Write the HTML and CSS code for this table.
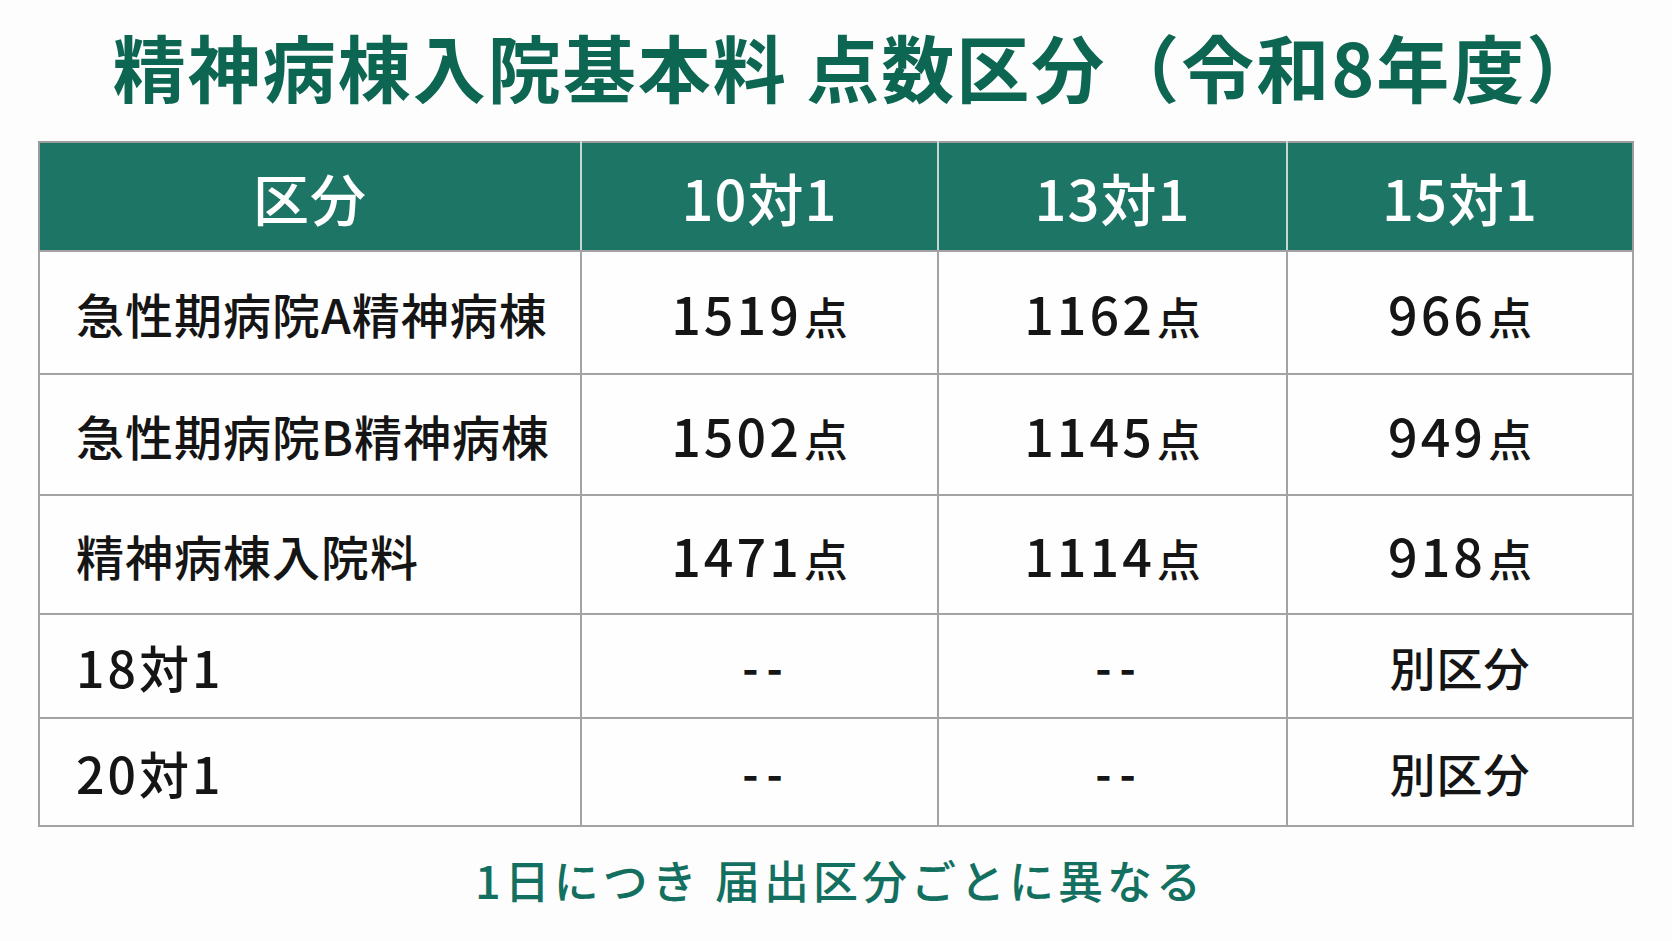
FILE: index.html
```html
<!DOCTYPE html>
<html lang="ja">
<head>
<meta charset="utf-8">
<title>精神病棟入院基本料 点数区分（令和8年度）</title>
<link rel="stylesheet" href="styles.css">
</head>
<body>
<main class="page">
  <h1 class="title">精神病棟入院基本料 点数区分（令和8年度）</h1>
  <table class="fees">
    <colgroup>
      <col class="c-label"><col class="c-a"><col class="c-b"><col class="c-c">
    </colgroup>
    <thead>
      <tr class="head-row">
        <th>区分</th><th>10対1</th><th>13対1</th><th>15対1</th>
      </tr>
    </thead>
    <tbody>
      <tr class="row-1">
        <td class="label">急性期病院A精神病棟</td>
        <td class="num">1519<span class="unit">点</span></td>
        <td class="num">1162<span class="unit">点</span></td>
        <td class="num">966<span class="unit">点</span></td>
      </tr>
      <tr class="row-2">
        <td class="label">急性期病院B精神病棟</td>
        <td class="num">1502<span class="unit">点</span></td>
        <td class="num">1145<span class="unit">点</span></td>
        <td class="num">949<span class="unit">点</span></td>
      </tr>
      <tr class="row-3">
        <td class="label">精神病棟入院料</td>
        <td class="num">1471<span class="unit">点</span></td>
        <td class="num">1114<span class="unit">点</span></td>
        <td class="num">918<span class="unit">点</span></td>
      </tr>
      <tr class="row-4">
        <td class="label ratio">18対1</td>
        <td class="dash">--</td>
        <td class="dash">--</td>
        <td class="other">別区分</td>
      </tr>
      <tr class="row-5">
        <td class="label ratio">20対1</td>
        <td class="dash">--</td>
        <td class="dash">--</td>
        <td class="other">別区分</td>
      </tr>
    </tbody>
  </table>
  <p class="note">1日につき 届出区分ごとに異なる</p>
</main>
</body>
</html>
```

FILE: styles.css
```css
html, body {
  margin: 0;
  padding: 0;
  background: #fdfdfd;
}

body {
  font-family: "Noto Sans CJK JP", "Noto Sans", sans-serif;
  color: #151515;
}

.page {
  display: flex;
  flex-direction: column;
  align-items: center;
  padding-top: 22px;
}

.title {
  margin: 0;
  padding-left: 42px;
  font-size: 73px;
  line-height: 86px;
  font-weight: 700;
  color: #0d6651;
  letter-spacing: 2px;
  white-space: nowrap;
}

.fees {
  margin-top: 33px;
  width: 1594px;
  border-collapse: collapse;
  table-layout: fixed;
  border: 2px solid #9c9c9c;
  background: #fefefe;
}

.c-label { width: 542px; }
.c-a { width: 357px; }
.c-b { width: 349px; }
.c-c { width: 346px; }

.fees th,
.fees td {
  border: 2px solid #a3a3a3;
  padding: 0;
}

.head-row {
  height: 109px;
  background: #1d7665;
}

.head-row th {
  color: #ffffff;
  font-size: 56px;
  font-weight: 500;
  text-align: center;
  letter-spacing: 1px;
  border-top-color: #9c9c9c;
  border-left-color: #c8d6d2;
  border-right-color: #c8d6d2;
}

.head-row th:first-child { border-left-color: #9c9c9c; }
.head-row th:last-child { border-right-color: #9c9c9c; }

.row-1 { height: 123px; }
.row-2 { height: 121px; }
.row-3 { height: 119px; }
.row-4 { height: 104px; }
.row-5 { height: 108px; }

.label {
  font-size: 48px;
  font-weight: 500;
  padding-left: 36px !important;
  text-align: left;
  letter-spacing: 1px;
}

.label.ratio {
  font-size: 50px;
  letter-spacing: 3px;
}

.num {
  text-align: center;
  font-size: 52px;
  font-weight: 500;
  letter-spacing: 3px;
}

.unit {
  font-size: 44px;
  letter-spacing: 0;
  margin-left: 2px;
}

.dash {
  text-align: center;
  font-size: 44px;
  font-weight: 700;
  letter-spacing: 8px;
  padding-left: 14px !important;
}

.other {
  text-align: center;
  font-size: 46px;
  font-weight: 500;
  letter-spacing: 1px;
}

.note {
  margin: 25px 0 0;
  padding-left: 8px;
  font-size: 45px;
  line-height: 56px;
  font-weight: 500;
  color: #137060;
  letter-spacing: 4px;
}
```
